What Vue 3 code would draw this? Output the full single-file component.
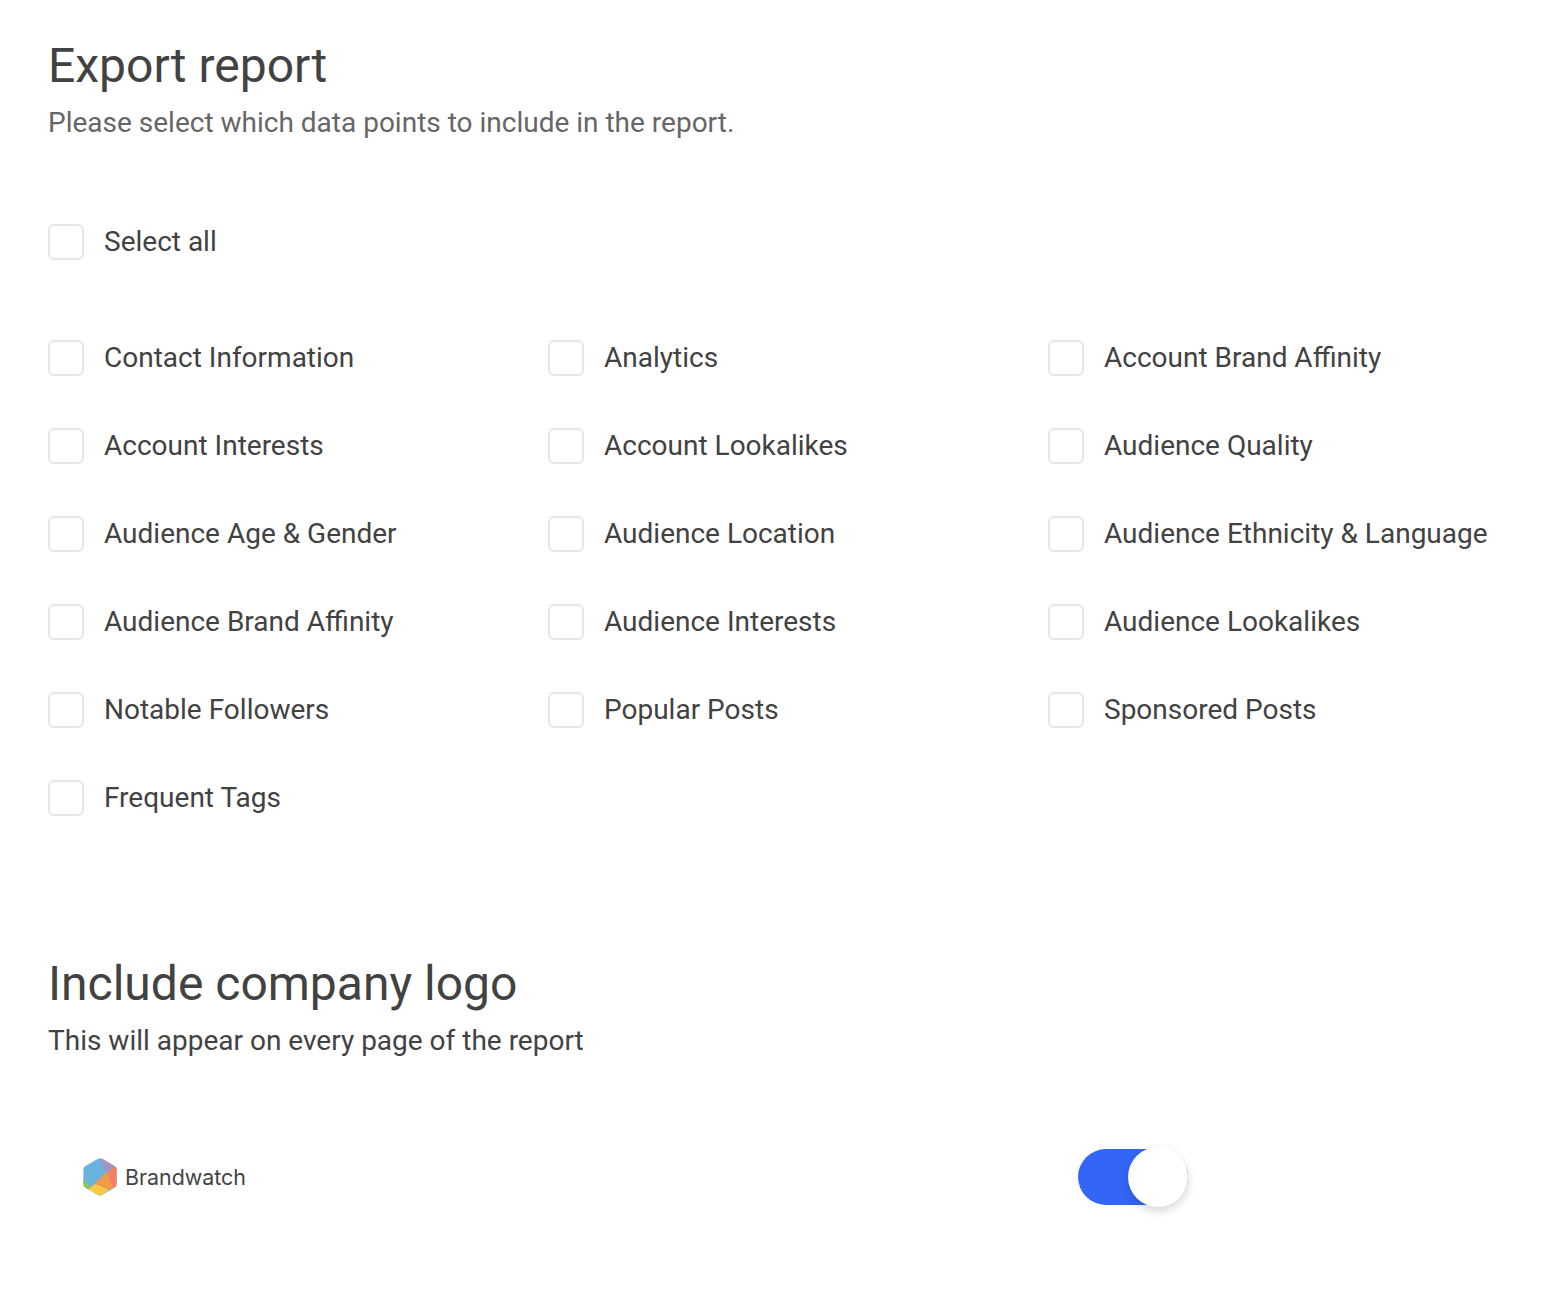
<script setup>
const items = [
  'Contact Information', 'Analytics', 'Account Brand Affinity',
  'Account Interests', 'Account Lookalikes', 'Audience Quality',
  'Audience Age & Gender', 'Audience Location', 'Audience Ethnicity & Language',
  'Audience Brand Affinity', 'Audience Interests', 'Audience Lookalikes',
  'Notable Followers', 'Popular Posts', 'Sponsored Posts',
  'Frequent Tags'
]
</script>

<template>
  <main class="page">
    <h1 class="title">Export report</h1>
    <p class="sub muted">Please select which data points to include in the report.</p>

    <label class="check select-all"><span class="box"></span><span>Select all</span></label>

    <div class="grid">
      <label v-for="item in items" :key="item" class="check"><span class="box"></span><span>{{ item }}</span></label>
    </div>

    <h2 class="title logo-title">Include company logo</h2>
    <p class="sub">This will appear on every page of the report</p>

    <div class="logo-row">
      <div class="brand">
        <svg class="hex" width="34" height="38" viewBox="0 0 34 38">
          <defs><clipPath id="hexclip"><path d="M15 .8 Q17 0 19 .8 L31.5 8 Q33.6 9.3 33.6 11.6 L33.6 26 Q33.6 28.4 31.5 29.7 L19 36.9 Q17 38 15 36.9 L2.5 29.7 Q.4 28.4 .4 26 L.4 11.6 Q.4 9.3 2.5 8 Z"/></clipPath></defs>
          <g clip-path="url(#hexclip)">
            <rect width="34" height="38" fill="#68b4dc"/>
            <path d="M16 0 L34 0 L34 9 L23.7 14.3 Z" fill="#a892c4"/>
            <path d="M23.7 14.3 L34 8 L34 30 L30.3 29.5 Z" fill="#f47f62"/>
            <path d="M23.7 14.3 L30.3 29.5 L26 32 L12 26 L7.7 29.3 Z" fill="#f29a45"/>
            <path d="M0 21 L7.7 29.3 L4 33 L0 32 Z" fill="#92c352"/>
            <path d="M7.7 29.3 L12 26 L26 32 L17 38 L4 33 Z" fill="#fbc842"/>
          </g>
        </svg>
        <span class="brand-name">Brandwatch</span>
      </div>
      <div class="toggle"><span class="knob"></span></div>
    </div>
  </main>
</template>

<style scoped>
.page {
  width: 1546px;
  height: 1298px;
  box-sizing: border-box;
  padding: 36px 0 0 48px;
  font-family: Roboto, sans-serif;
  color: #424242;
  background: #fff;
  overflow: hidden;
}
.title {
  margin: 0;
  font-size: 48px;
  line-height: 60px;
  font-weight: 400;
  color: #424242;
}
.sub {
  margin: 9px 0 0;
  font-size: 28px;
  line-height: 36px;
  color: #424242;
}
.muted { color: #666; }
.check {
  display: flex;
  align-items: center;
  gap: 20px;
  height: 36px;
  font-size: 28px;
  line-height: 36px;
  color: #424242;
}
.box {
  width: 36px;
  height: 36px;
  box-sizing: border-box;
  border: 2px solid #e6e6e6;
  border-radius: 6px;
  flex: none;
}
.select-all { margin-top: 83px; }
.grid {
  display: grid;
  grid-template-columns: repeat(3, 500px);
  row-gap: 52px;
  margin-top: 80px;
}
.logo-title { margin-top: 138px; }
.logo-row {
  display: flex;
  align-items: center;
  margin-top: 88px;
  height: 60px;
}
.brand {
  display: flex;
  align-items: center;
  gap: 8px;
  margin-left: 35px;
  width: 995px;
}
.brand-name {
  font-family: Inter, sans-serif;
  font-size: 21.4px;
  color: #444;
}
.toggle {
  position: relative;
  width: 110px;
  height: 56px;
  border-radius: 28px;
  background: #3366f6;
}
.knob {
  position: absolute;
  right: 0;
  top: -2px;
  width: 60px;
  height: 60px;
  border-radius: 50%;
  background: #fff;
  box-shadow: 0 4px 10px rgba(0, 0, 0, 0.16);
}
</style>
